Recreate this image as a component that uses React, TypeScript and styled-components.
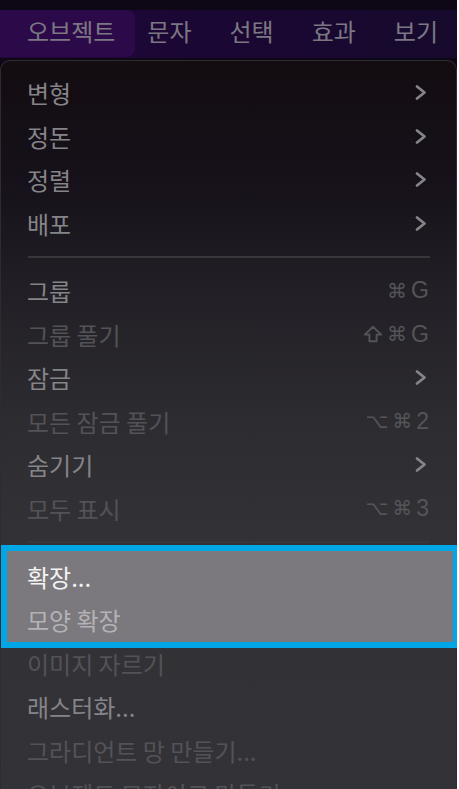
import styled, { createGlobalStyle } from "styled-components";

const GlobalStyle = createGlobalStyle`
  html, body {
    margin: 0;
    padding: 0;
    background: #ffffff;
  }
  body {
    font-family: "Noto Sans CJK KR", "Noto Sans", sans-serif;
    overflow: hidden;
  }
`;

const Screen = styled.div`
  width: 457px;
  height: 789px;
  padding-top: 10px;
  box-sizing: border-box;
  background: #0e0816;
  overflow: hidden;
`;

const MenuBar = styled.div`
  display: flex;
  height: 48px;
  background: linear-gradient(90deg, #1f0639 0%, #1a0733 50%, #170a2d 100%);
`;

const MenuBarItem = styled.div<{ $active?: boolean }>`
  height: 47px;
  line-height: 41px;
  font-size: 24px;
  color: #7b7783;
  white-space: nowrap;
  padding: ${(p) => (p.$active ? "0 20px 0 27px" : "0 19px")};
  margin-right: ${(p) => (p.$active ? "-7px" : "0")};
  background: ${(p) => (p.$active ? "#2c0a49" : "transparent")};
  border-radius: ${(p) => (p.$active ? "0 8px 8px 0" : "0")};
`;

const Panel = styled.div`
  margin-top: 2px;
  height: 760px;
  border: 1px solid #2e2b31;
  border-bottom: none;
  border-radius: 10px 10px 0 0;
  background: linear-gradient(
    180deg,
    #130c11 0%,
    #16111a 16%,
    #232127 32%,
    #2d2c31 48%,
    #323136 62%,
    #333237 100%
  );
  padding-top: 10px;
  box-sizing: border-box;
`;

type Tone = "normal" | "dim" | "bright" | "soft";

const Row = styled.div<{ $tone: Tone }>`
  display: flex;
  align-items: center;
  justify-content: space-between;
  height: 43.5px;
  padding: 0 27px 0 26px;
  font-size: 24px;
  white-space: nowrap;
  color: ${(p) =>
    p.$tone === "bright"
      ? "#f3f3f4"
      : p.$tone === "soft"
      ? "#b3b2b6"
      : p.$tone === "dim"
      ? "#535257"
      : "#858488"};
`;

const Shortcut = styled.span`
  display: flex;
  align-items: center;
  gap: 4px;
  font-family: "DejaVu Sans", "Noto Sans", sans-serif;
  font-size: 20px;
  color: #555459;
`;

const Key = styled.span`
  font-family: "Liberation Sans", "Noto Sans", sans-serif;
  font-size: 23px;
`;

const Chevron = styled.svg`
  width: 13px;
  height: 17px;
  margin-right: 2px;
  color: #858488;
`;

const ShiftIcon = styled.svg`
  width: 20px;
  height: 18px;
  color: #555459;
`;

const Separator = styled.div`
  height: 2px;
  margin: 11px 26px 11px 27px;
  background: #38373c;
`;

const Highlight = styled.div`
  position: relative;
  margin: -9.5px -3px -6px 0;
  border: 6px solid #00a6e6;
  padding-top: 4px;
  background: #7b797d;

  ${Row} {
    padding-left: 20px;
  }
`;

interface ItemProps {
  label: string;
  tone?: Tone;
  sub?: boolean;
  keys?: string[];
}

const Arrow = () => (
  <Chevron viewBox="0 0 13 17">
    <polyline
      points="3,2.5 10.5,8.5 3,14.5"
      fill="none"
      stroke="currentColor"
      strokeWidth="2.8"
      strokeLinecap="round"
      strokeLinejoin="round"
    />
  </Chevron>
);

const Shift = () => (
  <ShiftIcon viewBox="0 0 20 18">
    <path
      d="M10 1.8 L18.2 9.6 H13.6 V16.2 H6.4 V9.6 H1.8 Z"
      fill="none"
      stroke="currentColor"
      strokeWidth="1.9"
      strokeLinejoin="round"
    />
  </ShiftIcon>
);

const Item = ({ label, tone = "normal", sub, keys }: ItemProps) => (
  <Row $tone={tone}>
    <span>{label}</span>
    {sub && <Arrow />}
    {keys && (
      <Shortcut>
        {keys.map((k, i) =>
          k === "⇧" ? (
            <Shift key={i} />
          ) : /[A-Z0-9]/.test(k) ? (
            <Key key={i}>{k}</Key>
          ) : (
            <span key={i}>{k}</span>
          )
        )}
      </Shortcut>
    )}
  </Row>
);

const App = () => {
  return (
    <>
      <GlobalStyle />
      <Screen>
        <MenuBar>
          <MenuBarItem $active>오브젝트</MenuBarItem>
          <MenuBarItem>문자</MenuBarItem>
          <MenuBarItem>선택</MenuBarItem>
          <MenuBarItem>효과</MenuBarItem>
          <MenuBarItem>보기</MenuBarItem>
        </MenuBar>

        <Panel>
          <Item label="변형" sub />
          <Item label="정돈" sub />
          <Item label="정렬" sub />
          <Item label="배포" sub />

          <Separator />

          <Item label="그룹" keys={["⌘", "G"]} />
          <Item label="그룹 풀기" tone="dim" keys={["⇧", "⌘", "G"]} />
          <Item label="잠금" sub />
          <Item label="모든 잠금 풀기" tone="dim" keys={["⌥", "⌘", "2"]} />
          <Item label="숨기기" sub />
          <Item label="모두 표시" tone="dim" keys={["⌥", "⌘", "3"]} />

          <Separator />

          <Highlight>
            <Item label="확장..." tone="bright" />
            <Item label="모양 확장" tone="soft" />
          </Highlight>

          <Item label="이미지 자르기" tone="dim" />
          <Item label="래스터화..." />
          <Item label="그라디언트 망 만들기..." tone="dim" />
          <Item label="오브젝트 모자이크 만들기..." tone="dim" />
        </Panel>
      </Screen>
    </>
  );
};

export default App;
